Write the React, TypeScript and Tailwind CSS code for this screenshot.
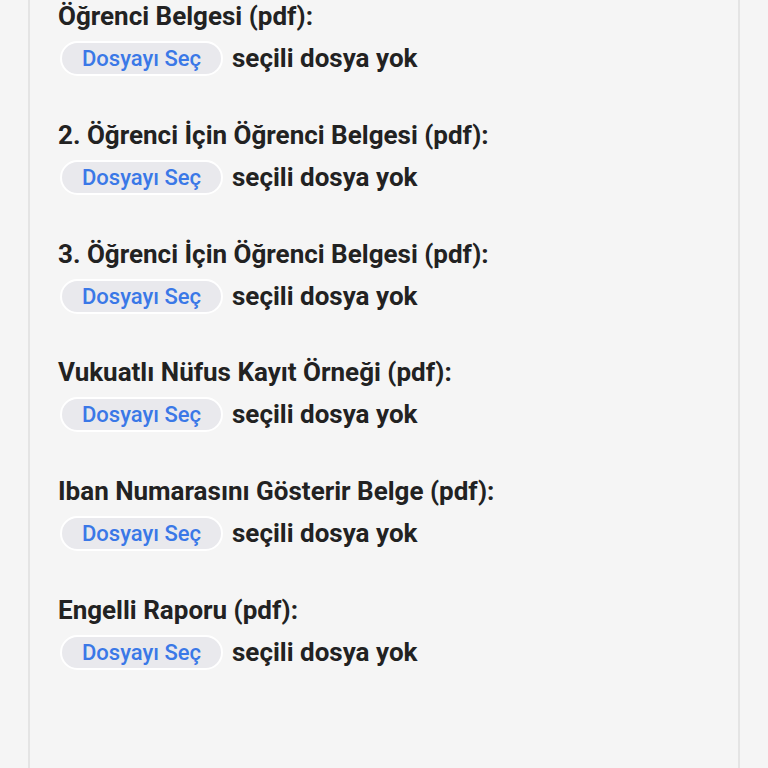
const fields = [
  "Öğrenci Belgesi (pdf):",
  "2. Öğrenci İçin Öğrenci Belgesi (pdf):",
  "3. Öğrenci İçin Öğrenci Belgesi (pdf):",
  "Vukuatlı Nüfus Kayıt Örneği (pdf):",
  "Iban Numarasını Gösterir Belge (pdf):",
  "Engelli Raporu (pdf):",
];

export default function App() {
  return (
    <div className="min-h-[768px] bg-[#f5f5f5] font-['Roboto',sans-serif] text-[#222]">
      <div className="ml-[28px] min-h-[768px] w-[712px] border-x-2 border-[#e4e4e4] pl-[28px]">
        {fields.map((label) => (
          <div key={label} className="mb-[42.8px]">
            <label className="block h-8 text-[26px] font-bold leading-8">
              {label}
            </label>
            <div className="mt-[9px] flex h-[35px] items-center">
              <button className="ml-[2px] flex h-[35px] w-[163px] items-center justify-center rounded-full border-2 border-white bg-[#e9e9ed] text-[22px] font-medium text-[#3a78e7]">
                Dosyayı Seç
              </button>
              <span className="ml-[9px] text-[26px] font-bold">
                seçili dosya yok
              </span>
            </div>
          </div>
        ))}
      </div>
    </div>
  );
}
